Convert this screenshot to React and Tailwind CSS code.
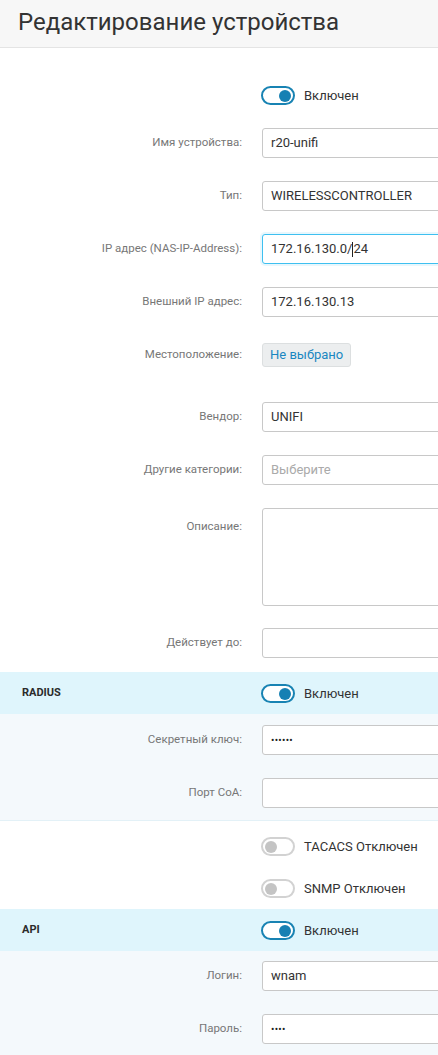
import React from "react";

const font = { fontFamily: "Roboto, 'Noto Sans', sans-serif" };

function Toggle({ on }) {
  return on ? (
    <div className="w-[34px] h-[19px] rounded-full border-2 border-[#1883b3] bg-white flex items-center justify-end pr-[2px] shrink-0">
      <div className="w-[12px] h-[12px] rounded-full bg-[#1680b3]" />
    </div>
  ) : (
    <div className="w-[34px] h-[19px] rounded-full border-2 border-[#d2d2d2] bg-white flex items-center justify-start pl-[2px] shrink-0">
      <div className="w-[12px] h-[12px] rounded-full bg-[#c4c4c4]" />
    </div>
  );
}

function ToggleRow({ on, label, className = "" }) {
  return (
    <div className={"flex items-center h-[19px] pl-[261px] " + className}>
      <Toggle on={on} />
      <span className="ml-[9px] text-[13px] text-[#333]">{label}</span>
    </div>
  );
}

function Row({ label, children, className = "", top = false }) {
  return (
    <div className={"flex " + (top ? "items-start" : "items-center") + " " + className}>
      <div className={"w-[242px] shrink-0 text-right text-[11.5px] text-[#777] " + (top ? "pt-[10px]" : "")}>{label}</div>
      <div className="ml-[20px] shrink-0">{children}</div>
    </div>
  );
}

function Input({ children, focus = false, h = "h-[30px]" }) {
  return (
    <div
      className={
        "w-[220px] " + h + " rounded-[3px] bg-white flex items-center pl-[8px] text-[13px] text-[#333] " +
        (focus
          ? "border border-[#3ec0f0] shadow-[0_0_0_2px_rgba(62,192,240,0.12)]"
          : "border border-[#c8c8c8]")
      }
    >
      {children}
    </div>
  );
}

function Band({ title }) {
  return (
    <div className="h-[42px] bg-[#dff5fc] flex items-center relative">
      <span className="absolute left-[22px] text-[11px] font-bold text-[#2b2b2b]">{title}</span>
      <div className="flex items-center pl-[261px] mt-[1px]">
        <Toggle on />
        <span className="ml-[9px] text-[13px] text-[#333]">Включен</span>
      </div>
    </div>
  );
}

export default function App() {
  return (
    <div className="w-[438px] h-[1055px] overflow-hidden bg-white" style={font}>
      <div className="h-[48px] bg-[#f7f7f7] border-b border-[#e4e4e4] flex items-center pl-[18px]">
        <h1 className="text-[24px] text-[#333] font-normal leading-none -mt-[3px]">Редактирование устройства</h1>
      </div>

      <ToggleRow on label="Включен" className="mt-[38px]" />

      <Row label="Имя устройства:" className="mt-[23px]">
        <Input>r20-unifi</Input>
      </Row>
      <Row label="Тип:" className="mt-[23px]">
        <Input>WIRELESSCONTROLLER</Input>
      </Row>
      <Row label="IP адрес (NAS-IP-Address):" className="mt-[23px]">
        <Input focus>
          172.16.130.0/<span className="inline-block w-px h-[15px] bg-[#222]" />24
        </Input>
      </Row>
      <Row label="Внешний IP адрес:" className="mt-[23px]">
        <Input>172.16.130.13</Input>
      </Row>
      <Row label="Местоположение:" className="mt-[26px]">
        <div className="h-[24px] px-[7px] rounded-[3px] bg-[#eceeef] border border-[#dcdfe0] flex items-center text-[13px] text-[#1a87c1]">
          Не выбрано
        </div>
      </Row>
      <Row label="Вендор:" className="mt-[35px]">
        <Input>UNIFI</Input>
      </Row>
      <Row label="Другие категории:" className="mt-[23px]">
        <Input>
          <span className="text-[#aaa]">Выберите</span>
        </Input>
      </Row>
      <Row label="Описание:" className="mt-[23px]" top>
        <div className="w-[220px] h-[98px] rounded-[3px] border border-[#c8c8c8] bg-white" />
      </Row>
      <Row label="Действует до:" className="mt-[22px]">
        <Input />
      </Row>

      <div className="mt-[14px]">
        <Band title="RADIUS" />
        <div className="bg-[#f4f9fc] border-b border-[#e3f1f7] pt-[11px] pb-[12px]">
          <Row label="Секретный ключ:">
            <Input>
              <span className="text-[10px] tracking-[0.3px] text-[#222]">••••••</span>
            </Input>
          </Row>
          <Row label="Порт CoA:" className="mt-[23px]">
            <Input />
          </Row>
        </div>
      </div>

      <ToggleRow on={false} label="TACACS Отключен" className="mt-[16px]" />
      <ToggleRow on={false} label="SNMP Отключен" className="mt-[23px]" />

      <div className="mt-[11px]">
        <Band title="API" />
        <div className="bg-[#f4f9fc] pt-[10px] pb-[12px]">
          <Row label="Логин:">
            <Input>wnam</Input>
          </Row>
          <Row label="Пароль:" className="mt-[23px]">
            <Input>
              <span className="text-[10px] tracking-[0.3px] text-[#222]">••••</span>
            </Input>
          </Row>
        </div>
      </div>
    </div>
  );
}
